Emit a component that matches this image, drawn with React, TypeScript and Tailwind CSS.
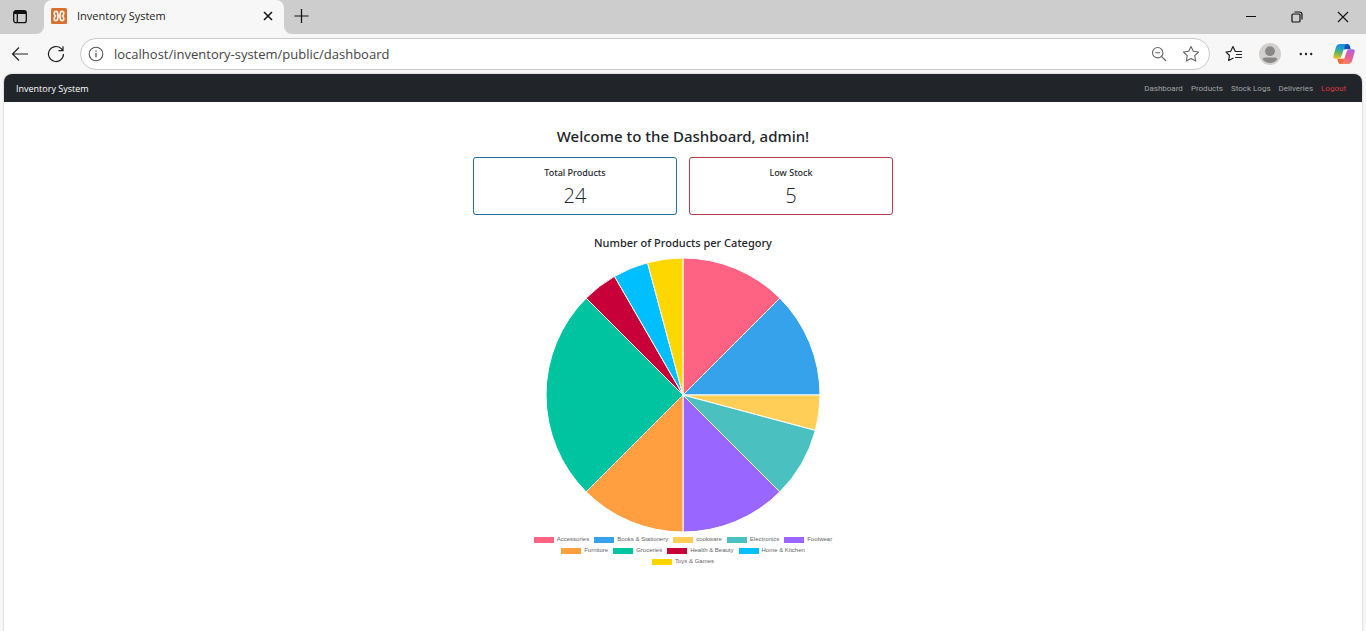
import type { ReactNode } from 'react';

type Category = { name: string; count: number; fill: string; swatch: string };

const categories: Category[] = [
  { name: 'Accessories', count: 3, fill: 'fill-[#ff6384]', swatch: 'bg-[#ff6384]' },
  { name: 'Books & Stationery', count: 3, fill: 'fill-[#36a2eb]', swatch: 'bg-[#36a2eb]' },
  { name: 'cookware', count: 1, fill: 'fill-[#ffce56]', swatch: 'bg-[#ffce56]' },
  { name: 'Electronics', count: 2, fill: 'fill-[#4bc0c0]', swatch: 'bg-[#4bc0c0]' },
  { name: 'Footwear', count: 3, fill: 'fill-[#9966ff]', swatch: 'bg-[#9966ff]' },
  { name: 'Furniture', count: 3, fill: 'fill-[#ff9f40]', swatch: 'bg-[#ff9f40]' },
  { name: 'Groceries', count: 6, fill: 'fill-[#00c49f]', swatch: 'bg-[#00c49f]' },
  { name: 'Health & Beauty', count: 1, fill: 'fill-[#c70039]', swatch: 'bg-[#c70039]' },
  { name: 'Home & Kitchen', count: 1, fill: 'fill-[#00bfff]', swatch: 'bg-[#00bfff]' },
  { name: 'Toys & Games', count: 1, fill: 'fill-[#ffd700]', swatch: 'bg-[#ffd700]' },
];

const total = categories.reduce((sum, c) => sum + c.count, 0);

function PieChart() {
  const r = 137;
  let start = 0;
  const point = (n: number) => {
    const a = (n / total) * Math.PI * 2;
    return `${(r * Math.sin(a)).toFixed(2)} ${(-r * Math.cos(a)).toFixed(2)}`;
  };
  return (
    <svg viewBox="-137 -137 274 274" className="size-[274px]" role="img" aria-label="Products per category">
      {categories.map((c) => {
        const from = start;
        start += c.count;
        return (
          <path
            key={c.name}
            d={`M0 0L${point(from)}A${r} ${r} 0 0 1 ${point(start)}Z`}
            className={`${c.fill} stroke-white`}
            strokeWidth="1"
            strokeLinejoin="round"
          />
        );
      })}
    </svg>
  );
}

function StatCard({ label, value, border }: { label: string; value: number; border: string }) {
  return (
    <div className={`flex flex-1 flex-col items-center rounded-[3px] border bg-white pt-2 pb-[2px] ${border}`}>
      <h2 className="font-['Noto_Sans',sans-serif] text-[9px] leading-[14px] font-medium">{label}</h2>
      <p className="text-[20px] leading-8 font-light">{value}</p>
    </div>
  );
}

function IconButton({ label, className, children }: { label: string; className: string; children: ReactNode }) {
  return (
    <button type="button" aria-label={label} className={`flex shrink-0 items-center justify-center ${className}`}>
      {children}
    </button>
  );
}

function TabStrip() {
  return (
    <div className="flex h-[34px] items-stretch bg-[#cdcdcd]">
      <div className="flex w-11 bg-[#f7f7f7]">
        <div className="flex flex-1 items-center rounded-br-lg bg-[#cdcdcd] pl-3">
          <IconButton label="Tab actions" className="size-4">
            <svg width="16" height="16" viewBox="0 0 16 16" fill="none" stroke="#111" strokeWidth="1.3">
              <rect x="1.7" y="1.7" width="12.6" height="12" rx="2.2" />
              <path d="M2 3.500h12" strokeWidth="3" />
              <path d="M5.3 5v9" />
            </svg>
          </IconButton>
        </div>
      </div>
      <div className="flex w-[240px] items-center rounded-t-lg bg-[#f7f7f7] pr-2 pb-[2px] pl-[7px]">
        <svg width="16" height="16" viewBox="0 0 16 16" className="shrink-0">
          <rect width="16" height="16" rx="1.500" fill="#d9702e" />
          <g fill="none" stroke="#fdf3ea" strokeWidth="1.600" strokeLinejoin="round" strokeLinecap="round">
            <path d="M6.700 7.200V5Q6.700 3.400 5 3.400 3.200 3.400 3.200 5.200 3.200 6.800 4.500 8 3.200 9.200 3.200 10.800 3.200 12.600 5 12.600 6.700 12.600 6.700 11V8.800H9.300V11Q9.300 12.600 11 12.600 12.800 12.600 12.800 10.800 12.800 9.200 11.500 8 12.800 6.800 12.800 5.200 12.800 3.400 11 3.400 9.300 3.400 9.300 5V7.200Z" />
          </g>
        </svg>
        <span className="flex-1 pl-[10px] text-[11px] leading-4 text-[#1b1b1b]">Inventory System</span>
        <IconButton label="Close tab" className="size-4">
          <svg width="16" height="16" viewBox="0 0 16 16" stroke="#111" strokeWidth="1.5">
            <path d="M4 4l8 8M12 4l-8 8" />
          </svg>
        </IconButton>
      </div>
      <div className="flex flex-1 bg-[#f7f7f7]">
        <div className="flex flex-1 items-center rounded-bl-lg bg-[#cdcdcd] pl-[9px]">
          <IconButton label="New tab" className="h-[34px] w-4 pb-[2px]">
            <svg width="16" height="16" viewBox="0 0 16 16" stroke="#111" strokeWidth="1.2">
              <path d="M8.500 1v14M1.500 8h14" />
            </svg>
          </IconButton>
          <div className="ml-auto flex">
            <IconButton label="Minimize" className="h-[34px] w-[46px]">
              <svg width="12" height="12" viewBox="0 0 12 12" stroke="#111">
                <path d="M1 5.500h10" />
              </svg>
            </IconButton>
            <IconButton label="Restore" className="h-[34px] w-[46px]">
              <svg width="12" height="12" viewBox="0 0 12 12" fill="none" stroke="#111" strokeWidth="1.200">
                <rect x="1" y="3" width="8" height="8" rx="1" />
                <path d="M3.500 1H8.500Q11 1 11 3.500V8.500" />
              </svg>
            </IconButton>
            <IconButton label="Close" className="h-[34px] w-[46px]">
              <svg width="12" height="12" viewBox="0 0 12 12" stroke="#111" strokeWidth="1.100">
                <path d="M1 1l10 10M11 1L1 11" />
              </svg>
            </IconButton>
          </div>
        </div>
      </div>
    </div>
  );
}

function AddressBar() {
  return (
    <div className="flex h-10 items-center bg-[#f7f7f7] pr-[10px] pl-[10px]">
      <IconButton label="Back" className="size-5">
        <svg width="18" height="18" viewBox="0 0 18 18" fill="none" stroke="#222" strokeWidth="1.200">
          <path d="M17 9H1.500M8 2.500L1.500 9 8 15.500" />
        </svg>
      </IconButton>
      <IconButton label="Refresh" className="ml-4 size-5">
        <svg width="18" height="18" viewBox="0 0 18 18" fill="none" stroke="#222" strokeWidth="1.200">
          <path d="M16.500 9A7.500 7.500 0 1 1 14.300 3.700L16 5.500M16 1.200V5.700H11.500" />
        </svg>
      </IconButton>
      <div className="ml-[14px] flex h-8 flex-1 items-center rounded-full border border-[#c9c9c9] bg-white pr-[10px] pl-[7px]">
        <svg width="16" height="16" viewBox="0 0 16 16" fill="none" stroke="#555" strokeWidth="1.100" className="shrink-0">
          <circle cx="8" cy="8" r="6.800" />
          <path d="M8 7v4.200M8 4.400v1.300" strokeWidth="1.300" />
        </svg>
        <input
          type="text"
          aria-label="Address"
          defaultValue="localhost/inventory-system/public/dashboard"
          className="ml-[10px] min-w-0 flex-1 bg-transparent text-[13px] leading-5 text-[#444] outline-none"
        />
        <IconButton label="Zoom" className="size-4">
          <svg width="16" height="16" viewBox="0 0 16 16" fill="none" stroke="#666" strokeWidth="1.100">
            <circle cx="6.700" cy="6.700" r="5.200" />
            <path d="M10.500 10.500L15 15M4.200 6.700h5" />
          </svg>
        </IconButton>
        <IconButton label="Add to favorites" className="ml-4 size-4">
          <svg width="18" height="18" viewBox="0 0 18 18" className="shrink-0" fill="none" stroke="#666" strokeWidth="1.100" strokeLinejoin="round">
            <path d="M9 1.500L11.300 6.300 16.600 7 12.700 10.700 13.700 16 9 13.400 4.300 16 5.300 10.700 1.400 7 6.700 6.300Z" />
          </svg>
        </IconButton>
      </div>
      <IconButton label="Favorites" className="ml-[14px] size-5">
        <svg width="18" height="18" viewBox="0 0 18 18" fill="none" stroke="#222" strokeWidth="1.200" strokeLinejoin="round" strokeLinecap="round">
          <path d="M11.500 6.500H16.500M11.500 9.500H16.500M10.500 12.500H16.500M11.500 6.500H10.300L8 1.500 5.700 6.300 1 7 4.500 10.500 3.600 15.500 8 13.200" />
        </svg>
      </IconButton>
      <IconButton label="Profile" className="ml-[14px] size-6">
        <svg width="22" height="22" viewBox="0 0 22 22">
          <circle cx="11" cy="11" r="11" fill="#d2d0ce" />
          <circle cx="11" cy="8.200" r="4.900" fill="#8a8886" />
          <path d="M3.500 16.200Q4 14.500 6 14.500H16Q18 14.500 18.500 16.200A9.300 9.300 0 0 1 3.500 16.200Z" fill="#8a8886" />
        </svg>
      </IconButton>
      <IconButton label="Settings and more" className="ml-[14px] size-5">
        <svg width="16" height="16" viewBox="0 0 16 16" fill="#222">
          <circle cx="2.800" cy="8" r="1.200" />
          <circle cx="8" cy="8" r="1.200" />
          <circle cx="13.200" cy="8" r="1.200" />
        </svg>
      </IconButton>
      <IconButton label="Copilot" className="ml-4 size-6">
        <svg width="24" height="24" viewBox="0 0 24 24">
          <defs>
            <linearGradient id="copilot-left" x1="0.600" y1="0" x2="0.400" y2="1">
              <stop offset="0" stopColor="#1a8fe0" />
              <stop offset="0.350" stopColor="#22a6c0" />
              <stop offset="0.650" stopColor="#72b84d" />
              <stop offset="1" stopColor="#efc229" />
            </linearGradient>
            <linearGradient id="copilot-right" x1="0.800" y1="0" x2="0.200" y2="1">
              <stop offset="0" stopColor="#a665e8" />
              <stop offset="0.500" stopColor="#ea5d99" />
              <stop offset="1" stopColor="#fa8a55" />
            </linearGradient>
          </defs>
          <path d="M11 2H15.500Q17.200 2 17.800 3.800L18.800 7.200H14.500L12.500 8Z" fill="#1653b9" />
          <path d="M13 22H8.500Q6.800 22 6.200 20.200L5.200 16.800H9.500L11.500 16Z" fill="#ee6a3c" />
          <path d="M8 2H15Q13.400 2.300 12.800 4.200L9.300 14.400Q8.500 16.800 6.500 16.800H3.500Q.6 16.800 1.400 14L4 5Q5 2 8 2Z" fill="url(#copilot-left)" />
          <path d="M16 22H9Q10.600 21.700 11.200 19.800L14.700 9.600Q15.500 7.200 17.500 7.200H20.500Q23.400 7.200 22.600 10L20 19Q19 22 16 22Z" fill="url(#copilot-right)" />
          <path d="M12.500 7.600H15Q14.400 8 14 9.300L11.600 16.400H9Q9.600 16 10 14.700Z" fill="#f7f7f7" />
        </svg>
      </IconButton>
    </div>
  );
}

const links = ['Dashboard', 'Products', 'Stock Logs', 'Deliveries'];

export default function App() {
  return (
    <div className="flex min-h-screen flex-col bg-[#f7f7f7] font-['Open_Sans','Noto_Sans',sans-serif] text-[#212529]">
      <TabStrip />
      <AddressBar />
      <div className="mx-1 flex-1 overflow-hidden rounded-t-lg bg-white shadow-[0_0_2px_rgba(0,0,0,0.3)]">
        <nav className="flex h-7 items-center justify-between bg-[#212529] pt-px pr-4 pl-3">
          <a href="#home" className="text-[9px] leading-[14px] text-white">
            Inventory System
          </a>
          <div className="flex gap-2 font-['Roboto',sans-serif] text-[8px] leading-3 text-[#a2a4a6]">
            {links.map((l) => (
              <a key={l} href="#page">
                {l}
              </a>
            ))}
            <a href="#logout" className="text-[#dc3545]">
              Logout
            </a>
          </div>
        </nav>
        <main className="mx-auto flex max-w-[420px] flex-col items-center pt-6">
          <h1 className="font-['Noto_Sans',sans-serif] text-[15px] leading-5 font-medium">Welcome to the Dashboard, admin!</h1>
          <div className="mt-[11px] flex w-full gap-3">
            <StatCard label="Total Products" value={24} border="border-[#1f6f9c]" />
            <StatCard label="Low Stock" value={5} border="border-[#b63a48]" />
          </div>
          <h2 className="mt-5 mb-[7px] font-['Noto_Sans',sans-serif] text-[11px] leading-4 font-medium">
            Number of Products per Category
          </h2>
          <PieChart />
          <ul className="mt-[2px] flex w-[304px] flex-wrap justify-center gap-x-[5px] font-['Liberation_Sans',Arial,sans-serif] text-[6px] leading-[11px] text-[#666]">
            {categories.map((c) => (
              <li key={c.name} className="flex items-center gap-[3px]">
                <span className={`h-[6px] w-5 ${c.swatch}`} />
                {c.name}
              </li>
            ))}
          </ul>
        </main>
      </div>
    </div>
  );
}
